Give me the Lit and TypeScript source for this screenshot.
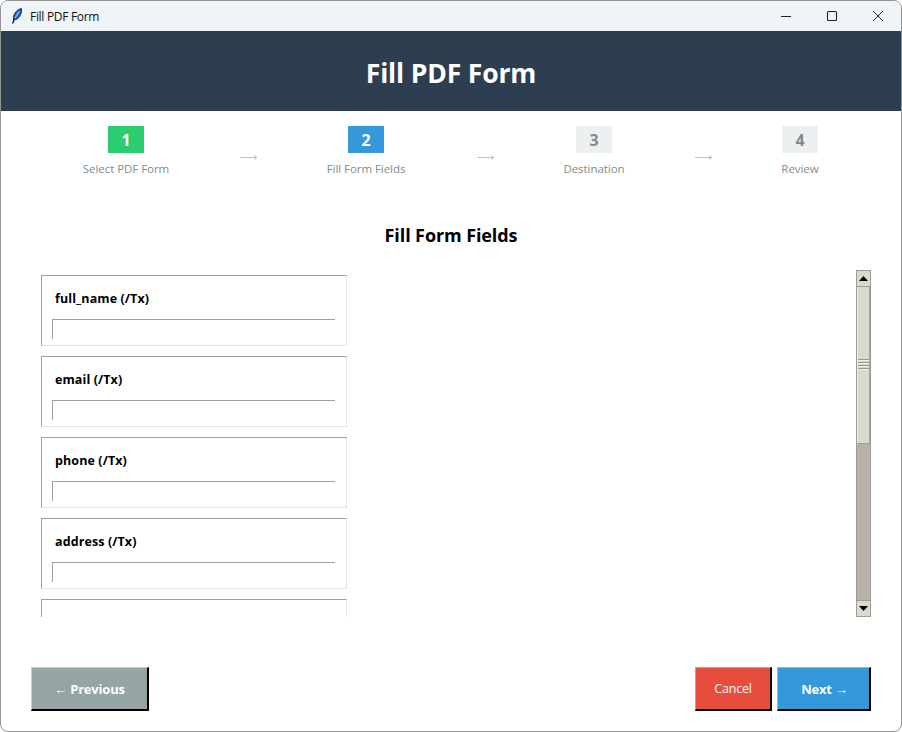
import { LitElement, html, css, svg } from "lit";
import { customElement } from "lit/decorators.js";

const STEPS = [
  { n: "1", label: "Select PDF Form", w: 86, cls: "done", odd: false },
  { n: "2", label: "Fill Form Fields", w: 78, cls: "current", odd: true },
  { n: "3", label: "Destination", w: 60, cls: "todo", odd: false },
  { n: "4", label: "Review", w: 36, cls: "todo", odd: true },
];
const FIELDS = ["full_name (/Tx)", "email (/Tx)", "phone (/Tx)", "address (/Tx)", ""];

@customElement("app-root")
export class AppRoot extends LitElement {
  static styles = css`
    :host {
      display: flex;
      flex-direction: column;
      width: 902px;
      height: 732px;
      box-sizing: border-box;
      border: 1px solid #949494;
      border-radius: 8px;
      overflow: hidden;
      background: #fff;
      font-family: "Open Sans", "Noto Sans", sans-serif;
      color: #000;
    }
    .titlebar {
      height: 30px;
      flex: none;
      display: flex;
      align-items: center;
      background: #eff4f9;
      font-size: 12px;
      padding-left: 11px;
      color: #111;
    }
    .titlebar .feather { width: 10px; height: 16px; margin-right: 8px; flex: none; }
    .titlebar .name { flex: 1; letter-spacing: -0.3px; }
    .winbtns { display: flex; }
    .winbtn { width: 46px; height: 30px; display: flex; align-items: center; justify-content: center; }
    .winbtn svg { width: 12px; height: 12px; }
    .header {
      box-sizing: border-box;
      height: 80px;
      flex: none;
      padding-top: 3px;
      background: #2c3e50;
      color: #fff;
      display: flex;
      align-items: center;
      justify-content: center;
      font-size: 26.5px;
      font-weight: 700;
      letter-spacing: -0.15px;
    }
    .steps {
      flex: none;
      display: flex;
      align-items: flex-start;
      padding: 15px 0 0 82px;
      height: 64px;
    }
    .step {
      display: flex;
      flex-direction: column;
      align-items: center;
      flex: none;
    }
    .step.odd { padding-right: 1px; }
    .badge {
      width: 36px;
      height: 27px;
      display: flex;
      align-items: center;
      justify-content: center;
      font-size: 16px;
      font-weight: 700;
    }
    .done { background: #2ecc71; color: #fff; }
    .current { background: #3498db; color: #fff; }
    .todo { background: #ecf0f1; color: #7f8c8d; }
    .step-label {
      margin-top: 8px;
      font-size: 11.5px;
      line-height: 16px;
      color: #7f8c8d;
      white-space: nowrap;
      letter-spacing: -0.05px;
    }
    .arrow {
      flex: none;
      width: 18px;
      margin: 27px 69px 0 71px;
      height: 8px;
      color: #bdc3c7;
    }
    .arrow svg { display: block; width: 18px; height: 8px; }
    .heading {
      flex: none;
      text-align: center;
      font-size: 18px;
      font-weight: 700;
      line-height: 24px;
      margin-top: 33px;
      letter-spacing: -0.1px;
    }
    .scroller {
      flex: none;
      margin: 23px 30px 0 40px;
      height: 347px;
      display: flex;
      justify-content: space-between;
      overflow: hidden;
    }
    .list {
      padding-top: 5px;
      display: flex;
      flex-direction: column;
      gap: 10px;
      height: 342px;
      overflow: hidden;
    }
    .card {
      box-sizing: border-box;
      width: 306px;
      height: 71px;
      flex: none;
      border: 1px solid;
      border-color: #a0a0a0 #e3e3e3 #e3e3e3 #a0a0a0;
      padding: 14px 0 0 10px;
    }
    .card label {
      display: block;
      padding-left: 3px;
      font-size: 12.5px;
      font-weight: 700;
      line-height: 18px;
      height: 18px;
      letter-spacing: 0.1px;
    }
    .card .input {
      margin-top: 11px;
      box-sizing: border-box;
      width: 283px;
      height: 20px;
      border-top: 1px solid #a0a0a0;
      border-left: 1px solid #a0a0a0;
    }
    .scrollbar {
      box-sizing: border-box;
      width: 15px;
      height: 347px;
      background: #b7b3a8;
      display: flex;
      flex-direction: column;
      border: 1px solid #a09c92;
    }
    .sb-btn {
      height: 15px;
      flex: none;
      background: #d9d8d2;
      display: flex;
      align-items: center;
      justify-content: center;
      border-bottom: 1px solid #a09c92;
    }
    .sb-btn.down { border-bottom: 0; border-top: 1px solid #a09c92; margin-top: auto; }
    .sb-btn svg { width: 9px; height: 5px; }
    .thumb {
      flex: none;
      height: 157px;
      box-sizing: border-box;
      padding-bottom: 3px;
      background: #d9d8d2;
      border-left: 1px solid #ecebe6;
      border-right: 1px solid #a5a298;
      border-bottom: 1px solid #a09c92;
      display: flex;
      flex-direction: column;
      align-items: center;
      justify-content: center;
      gap: 2px;
    }
    .thumb i { display: block; width: 11px; height: 1px; background: #9a978d; box-shadow: 0 1px 0 #f0efea; }
    .footer {
      flex: none;
      display: flex;
      margin-top: 50px;
      padding: 0 30px;
      gap: 5px;
    }
    .btn {
      box-sizing: border-box;
      height: 44px;
      display: flex;
      align-items: center;
      justify-content: center;
      color: #fff;
      font-size: 12.5px;
      border-style: solid;
      border-width: 1px 2px 2px 1px;
      border-right-color: #000;
      border-bottom-color: #000;
      letter-spacing: -0.2px;
    }
    .bold { font-weight: 700; font-size: 13px; }
    .prev {
      width: 118px;
      margin-right: auto;
      background: #95a5a6;
      border-top-color: #c3d0d0;
      border-left-color: #c3d0d0;
    }
    .cancel {
      width: 77px;
      background: #e74c3c;
      border-top-color: #f58a7e;
      border-left-color: #f58a7e;
    }
    .next {
      width: 94px;
      padding-left: 2px;
      background: #3498db;
      border-top-color: #7cc0ee;
      border-left-color: #7cc0ee;
    }
  `;

  private arrow() {
    return html`<div class="arrow">
      <svg viewBox="0 0 18 8" fill="none" stroke="currentColor" stroke-width="1">
        <path d="M0 4.5H17M14 2.5L17 4.5L14 6.5"></path>
      </svg>
    </div>`;
  }

  private feather() {
    return svg`<svg class="feather" viewBox="0 0 10 16">
      <path d="M0.6 15.5L2.6 10" stroke="#000" stroke-width="1.2" fill="none"></path>
      <path d="M1.8 11.5C0.8 7 4 2 9.3 0.6C9.6 4 8.8 6.5 7.5 8.5C6.2 10.5 4 12 1.8 11.5Z" fill="#2f6fc8" stroke="#07142b" stroke-width="1"></path>
      <path d="M3 10L7.3 3.5" stroke="#bcd8f5" stroke-width="0.9"></path>
    </svg>`;
  }

  render() {
    return html`
      <div class="titlebar">
        ${this.feather()}
        <span class="name">Fill PDF Form</span>
        <div class="winbtns">
          <div class="winbtn"><svg viewBox="0 0 12 12" fill="none" stroke="#222" stroke-width="1"><path d="M1 6.5H11"></path></svg></div>
          <div class="winbtn"><svg viewBox="0 0 12 12" fill="none" stroke="#222" stroke-width="1.1"><rect x="1.5" y="1.5" width="9" height="9" rx="1"></rect></svg></div>
          <div class="winbtn"><svg viewBox="0 0 12 12" fill="none" stroke="#222" stroke-width="1"><path d="M1 1L11 11M11 1L1 11"></path></svg></div>
        </div>
      </div>
      <div class="header">Fill PDF Form</div>
      <div class="steps">
        ${STEPS.map(
          (s, i) => html`
            <div class="step ${s.odd ? "odd" : ""}" style="width:${s.w}px">
              <div class="badge ${s.cls}">${s.n}</div>
              <div class="step-label">${s.label}</div>
            </div>
            ${i < STEPS.length - 1 ? this.arrow() : ""}
          `
        )}
      </div>
      <div class="heading">Fill Form Fields</div>
      <div class="scroller">
        <div class="list">
          ${FIELDS.map(
            (f) => html`<div class="card">
              <label>${f}</label>
              <div class="input"></div>
            </div>`
          )}
        </div>
        <div class="scrollbar">
          <div class="sb-btn"><svg viewBox="0 0 9 5"><path d="M4.5 0L9 5H0Z" fill="#000"></path></svg></div>
          <div class="thumb"><i></i><i></i><i></i><i></i></div>
          <div class="sb-btn down"><svg viewBox="0 0 9 5"><path d="M0 0H9L4.5 5Z" fill="#000"></path></svg></div>
        </div>
      </div>
      <div class="footer">
        <div class="btn bold prev">← Previous</div>
        <div class="btn cancel">Cancel</div>
        <div class="btn bold next">Next →</div>
      </div>
    `;
  }
}
